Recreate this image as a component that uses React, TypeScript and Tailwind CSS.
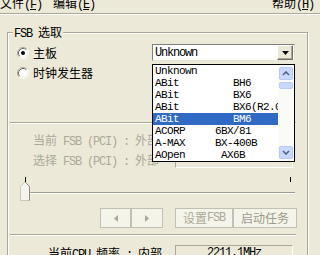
import React from "react";

function L({ children, className = "" }: { children: React.ReactNode; className?: string }) {
  return (
    <span className={`font-['Liberation_Mono',monospace] text-[12px] tracking-[-1.2px] whitespace-pre ${className}`}>
      {children}
    </span>
  );
}

function MenuItem({ label, k }: { label: string; k: string }) {
  return (
    <span className="whitespace-pre">
      {label}
      <L>
        (<span className="underline">{k}</span>)
      </L>
    </span>
  );
}

function Radio({ checked }: { checked?: boolean }) {
  return (
    <svg width="12" height="12" viewBox="0 0 12 12" className="shrink-0">
      <circle cx="6" cy="6" r="5" fill="#fff" />
      <path d="M2.11 9.89 A5.5 5.5 0 0 1 9.89 2.11" stroke="#ACA899" fill="none" />
      <path d="M9.89 2.11 A5.5 5.5 0 0 1 2.11 9.89" stroke="#fff" fill="none" />
      <path d="M2.82 9.18 A4.5 4.5 0 0 1 9.18 2.82" stroke="#716F64" fill="none" />
      <path d="M9.18 2.82 A4.5 4.5 0 0 1 2.82 9.18" stroke="#F1EFE2" fill="none" />
      {checked && <circle cx="6" cy="6" r="2" fill="#000" />}
    </svg>
  );
}

function StaticBox({ children }: { children?: React.ReactNode }) {
  return (
    <div className="w-[118px] h-[16px] border border-t-[#ACA899] border-l-[#ACA899] border-b-white border-r-white flex items-center justify-center leading-[12px]">
      {children}
    </div>
  );
}

function Sep() {
  return <div className="ml-[2px] w-[286px] h-[2px] border-t border-b border-t-[#ACA899] border-b-white" />;
}

function ScrollBtn({ up }: { up?: boolean }) {
  return (
    <div className="mx-px h-[13px] rounded-[2px] border border-[#B7C9F4] bg-[#C9D8FC] flex items-center justify-center">
      <svg width="8" height="5" viewBox="0 0 8 5">
        <path d={up ? "M1 4 L4 1 L7 4" : "M1 1 L4 4 L7 1"} stroke="#4D6185" strokeWidth="1.6" fill="none" />
      </svg>
    </div>
  );
}

const boards = [
  "Unknown",
  "ABit         BH6",
  "ABit         BX6",
  "ABit         BX6(R2.0)",
  "ABit         BM6",
  "ACORP     6BX/81",
  "A-MAX     BX-400B",
  "AOpen      AX6B",
];

export default function App() {
  return (
    <div className="w-[320px] h-[255px] overflow-hidden bg-[#ECE9D8] text-[12px] text-black font-['Noto_Sans_CJK_SC',sans-serif]">
      {/* menu */}
      <div className="-mt-[5px] h-[18px] flex items-center leading-[16px] pr-[6px]">
        <MenuItem label="文件" k="F" />
        <span className="ml-[11px]">
          <MenuItem label="编辑" k="E" />
        </span>
        <span className="ml-auto">
          <MenuItem label="帮助" k="H" />
        </span>
      </div>
      <div className="h-px bg-[#ACA899]" />
      <div className="h-px bg-white" />

      {/* FSB group */}
      <div className="relative mt-[17px] ml-[7px] w-[301px] h-[240px] border border-[#ACA899] shadow-[inset_1px_1px_0_#fff,1px_1px_0_#fff]">
        <div className="absolute -top-[7px] left-[5px] px-px bg-[#ECE9D8] leading-[12px] whitespace-pre">
          <L>FSB </L>选取
        </div>

        <div className="flex h-[89px]">
          <div className="w-[144px] pt-[10px] pl-[9px]">
            <div className="h-[20px] flex items-center gap-[4px] leading-[16px]">
              <Radio checked />
              主板
            </div>
            <div className="h-[20px] flex items-center gap-[4px] leading-[16px]">
              <Radio />
              时钟发生器
            </div>
          </div>
          <div className="mt-[11px] w-[143px] h-[17px] flex bg-white border border-t-[#808080] border-l-[#808080] border-b-[#E8E6DA] border-r-[#E8E6DA]">
            <div className="flex-1 pl-[2px] flex items-center leading-[12px]">
              <L>Unknown</L>
            </div>
            <div className="mr-px w-[16px] bg-[#ECE9D8] border border-t-white border-l-white border-b-[#716F64] border-r-[#716F64] shadow-[inset_-1px_-1px_0_#ACA899] flex items-center justify-center">
              <svg width="7" height="4" viewBox="0 0 7 4">
                <path d="M0 0 H7 L3.5 4 Z" fill="#000" />
              </svg>
            </div>
          </div>
        </div>

        <Sep />

        <div className="mt-[8px] flex h-[16px] leading-[16px]">
          <div className="w-[167px] pl-[25px] text-[#ACA899] whitespace-pre">
            当前<L> FSB (PCI) : </L>外部
          </div>
          <StaticBox />
        </div>
        <div className="mt-[4px] flex h-[16px] leading-[16px]">
          <div className="w-[167px] pl-[25px] text-[#ACA899] whitespace-pre">
            选择<L> FSB (PCI) : </L>外部
          </div>
          <StaticBox />
        </div>

        {/* slider */}
        <div className="mt-[8px] ml-[10px] h-[26px]">
          <svg width="278" height="26" viewBox="0 0 278 26">
            <line x1="7.5" y1="1" x2="7.5" y2="6" stroke="#000" />
            <line x1="272.5" y1="1" x2="272.5" y2="6" stroke="#000" />
            <rect x="11" y="16" width="266" height="1" fill="#9D9C8E" />
            <rect x="11" y="17" width="266" height="1" fill="#fff" />
            <path d="M2.5 10.5 L7 6 L11.5 10.5 V24.5 H2.5 Z" fill="#F4F3EE" stroke="#C9C7BA" />
            <path d="M7 6 L11.5 10.5 V24.5" fill="none" stroke="#8E8C80" />
          </svg>
        </div>

        {/* buttons */}
        <div className="mt-[6px] h-[20px] flex text-[#ACA899] leading-[12px]">
          <div className="ml-[92px] w-[31px] border border-[#C2C0B2] bg-[#F5F4EA] flex items-center justify-center">
            <svg width="4" height="7" viewBox="0 0 4 7">
              <path d="M4 0 V7 L0 3.5 Z" fill="#ACA899" />
            </svg>
          </div>
          <div className="w-[32px] border border-[#C2C0B2] bg-[#F5F4EA] flex items-center justify-center">
            <svg width="4" height="7" viewBox="0 0 4 7">
              <path d="M0 0 V7 L4 3.5 Z" fill="#ACA899" />
            </svg>
          </div>
          <div className="ml-[12px] w-[58px] border border-[#C2C0B2] bg-[#F5F4EA] flex items-center justify-center whitespace-pre">
            设置<L>FSB</L>
          </div>
          <div className="w-[64px] border border-[#C2C0B2] bg-[#F5F4EA] flex items-center justify-center text-[#9C9A8C]">
            启动任务
          </div>
        </div>

        <div className="mt-[6px]">
          <Sep />
        </div>

        <div className="mt-[9px] flex h-[16px] leading-[16px]">
          <div className="w-[167px] pl-[40px] whitespace-pre">
            当前<L>CPU </L>频率<L> : </L>内部
          </div>
          <StaticBox>
            <L>2211.1MHz</L>
          </StaticBox>
        </div>

        {/* open dropdown list */}
        <div className="absolute left-[144px] top-[31px] z-10 w-[143px] h-[98px] border border-black bg-white flex">
          <div className="w-[125px]">
            {boards.map((b, i) => (
              <div
                key={b}
                className={`h-[12px] leading-[12px] pl-[2px] overflow-hidden whitespace-pre font-['Liberation_Mono',monospace] text-[11px] tracking-[-0.6px] ${
                  i === 4 ? "bg-[#316AC5] text-white" : ""
                }`}
              >
                {b}
              </div>
            ))}
          </div>
          <div className="flex-1 bg-[#FAFAF7] flex flex-col pt-[2px]">
            <ScrollBtn up />
            <div className="mx-px mt-[2px] h-[7px] rounded-[2px] border border-[#B7C9F4] bg-[#C9D8FC]" />
            <div className="flex-1" />
            <div className="mb-[2px]">
              <ScrollBtn />
            </div>
          </div>
        </div>
      </div>
    </div>
  );
}
